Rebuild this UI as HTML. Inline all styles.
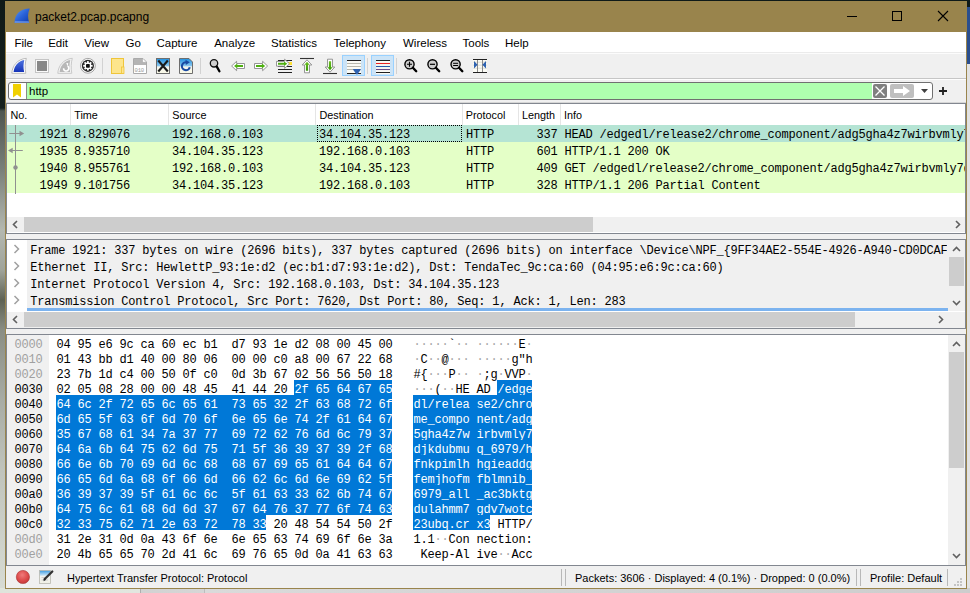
<!DOCTYPE html>
<html><head><meta charset="utf-8"><title>packet2.pcap.pcapng</title>
<style>
*{box-sizing:border-box}
html,body{margin:0;padding:0}
body{width:970px;height:593px;overflow:hidden;position:relative;background:#9aa097;font-family:"Liberation Sans",sans-serif;}
.a{position:absolute}
.ui{font-family:"Liberation Sans",sans-serif;color:#000;white-space:pre}
.mono{font-family:"Liberation Mono",monospace;white-space:pre;font-size:12px;letter-spacing:-0.2px;color:#000}
.sbg{background:#f0f0f0}
.thumb{background:#cdcdcd}
.bord{background:#828790}
</style></head>
<body>
<div class="a" style="left:0;top:0;width:970px;height:593px;background:linear-gradient(#0f1a18 0,#17211d 108px,#4e5650 111px,#7a807a 170px,#b4b8b0 230px,#a0a49a 270px,#5e6254 300px,#8a8e84 330px,#a8aca4 400px,#c0c4bc 470px,#d8dcd4 593px)"></div>
<div class="a" style="left:966px;top:0;width:4px;height:593px;background:#e2e2e2"></div>
<div class="a" style="left:966px;top:0;width:4px;height:7px;background:#0f1a18"></div>
<div class="a" style="left:966px;top:7px;width:4px;height:57px;background:#2b4f8e"></div>
<div class="a" style="left:0;top:588px;width:970px;height:5px;background:linear-gradient(90deg,#dfe4db 0,#e2e6df 140px,#8a8a8a 140px,#d2d2d2 141px,#d6d6d6 204px,#a0a0a0 204px,#dadada 205px,#cdcdcd 100%)"></div>
<div class="a" style="left:5px;top:1px;width:962px;height:588px;background:#99844c"></div>
<div class="a" style="left:6px;top:2px;width:960px;height:30px;background:#99844c"></div>
<div class="a sbg" style="left:6px;top:32px;width:960px;height:556px"></div>
<svg class="a" style="left:10px;top:4px" width="24" height="24" viewBox="10 4 24 24">
<defs><linearGradient id="fin" x1="0" y1="0" x2="1" y2="1"><stop offset="0" stop-color="#5a9af2"/><stop offset="0.5" stop-color="#2a62d8"/><stop offset="1" stop-color="#0c3aae"/></linearGradient>
<linearGradient id="finb" x1="0" y1="0" x2="0" y2="1"><stop offset="0" stop-color="#8ab4f4" stop-opacity="0"/><stop offset="0.5" stop-color="#9cbcf4" stop-opacity="0.7"/><stop offset="1" stop-color="#5c86d0" stop-opacity="0.8"/></linearGradient></defs>
<path d="M29.8 8.6 C20.5 8.8 14.8 13.5 14.5 22.9 L29.2 22.9 C27.6 18 27.6 13 29.8 8.6 Z" fill="url(#fin)"/>
<path d="M15 20.8 L28.6 20.8 L29.2 22.9 L14.5 22.9 Z" fill="url(#finb)"/>
</svg>
<div class="a ui" style="left:35px;top:10px;font-size:12px;color:#000">packet2.pcap.pcapng</div>
<div class="a" style="left:847px;top:16px;width:10px;height:1px;background:#000"></div>
<div class="a" style="left:892px;top:11px;width:10px;height:10px;border:1px solid #000"></div>
<svg class="a" style="left:937px;top:10px" width="12" height="12" viewBox="0 0 12 12"><path d="M1 1 L11 11 M11 1 L1 11" stroke="#000" stroke-width="1.1"/></svg>
<div class="a" style="left:6px;top:32px;width:960px;height:20px;background:#fff"></div>
<div class="a" style="left:6px;top:52px;width:960px;height:1px;background:#ebebeb"></div><div class="a" style="left:6px;top:53px;width:960px;height:1px;background:#fcfcfc"></div>
<div class="a ui" style="left:14.4px;top:37px;font-size:11.5px">File</div>
<div class="a ui" style="left:48.2px;top:37px;font-size:11.5px">Edit</div>
<div class="a ui" style="left:84.3px;top:37px;font-size:11.5px">View</div>
<div class="a ui" style="left:125.6px;top:37px;font-size:11.5px">Go</div>
<div class="a ui" style="left:156.5px;top:37px;font-size:11.5px">Capture</div>
<div class="a ui" style="left:214.2px;top:37px;font-size:11.5px">Analyze</div>
<div class="a ui" style="left:271px;top:37px;font-size:11.5px">Statistics</div>
<div class="a ui" style="left:333.5px;top:37px;font-size:11.5px">Telephony</div>
<div class="a ui" style="left:403px;top:37px;font-size:11.5px">Wireless</div>
<div class="a ui" style="left:462.5px;top:37px;font-size:11.5px">Tools</div>
<div class="a ui" style="left:505px;top:37px;font-size:11.5px">Help</div>
<svg class="a" style="left:0;top:0" width="500" height="80" viewBox="0 0 500 80">
<defs>
<linearGradient id="tfin" x1="0" y1="0" x2="0" y2="1"><stop offset="0" stop-color="#4f74e0"/><stop offset="1" stop-color="#1533b8"/></linearGradient>
<linearGradient id="docb" x1="0" y1="0" x2="0" y2="1"><stop offset="0" stop-color="#1e90e0"/><stop offset="0.5" stop-color="#8cc8f0"/><stop offset="0.55" stop-color="#f4f4ec"/><stop offset="1" stop-color="#fafae8"/></linearGradient>
<linearGradient id="grn" x1="0" y1="0" x2="0" y2="1"><stop offset="0" stop-color="#6cc020"/><stop offset="1" stop-color="#3a9a08"/></linearGradient>
</defs>
<!-- fin -->
<path d="M11.8 73.3 C12.3 66 17 59.2 26.3 58.3 C25 63 24.8 68 25.8 73.3 Z" fill="#fff" stroke="#b4b4b4" stroke-width="0.9"/>
<path d="M13.6 72 C14.2 66 18 61 24.3 59.9 C23.3 64 23.2 68 24.2 72 Z" fill="url(#tfin)"/>
<!-- stop -->
<rect x="35.5" y="59.5" width="13" height="13" fill="#fafafa" stroke="#c4c4c4"/>
<rect x="37" y="61" width="10" height="10" fill="#888"/>
<!-- restart -->
<path d="M57.8 73.3 C58.3 66 63 59.2 72.3 58.3 C71 63 70.8 68 71.8 73.3 Z" fill="#f4f4f4" stroke="#c4c4c4" stroke-width="0.9"/>
<path d="M59.6 72 C60.2 66 64 61 70.3 59.9 C69.3 64 69.2 68 70.2 72 Z" fill="#b8b8b8"/>
<path d="M67.6 66.2 A2.6 2.6 0 1 1 63.6 68.2" stroke="#fff" stroke-width="1.5" fill="none"/>
<path d="M66.2 63.2 L68.2 63 L67.8 66.5 Z" fill="#fff"/>
<!-- gear -->
<circle cx="87.9" cy="65.8" r="7.4" fill="#fff" stroke="#9a9a9a" stroke-width="0.9"/>
<circle cx="87.9" cy="65.8" r="6.1" fill="#2a2a2a"/>
<g fill="#fff" transform="translate(87.9 65.8)">
<circle r="3.4"/>
<rect x="-0.9" y="-4.7" width="1.8" height="9.4"/>
<rect x="-4.7" y="-0.9" width="9.4" height="1.8"/>
<rect x="-0.9" y="-4.7" width="1.8" height="9.4" transform="rotate(45)"/>
<rect x="-0.9" y="-4.7" width="1.8" height="9.4" transform="rotate(-45)"/>
</g>
<rect x="86" y="63.9" width="3.8" height="3.8" rx="0.8" fill="#111"/>
<!-- separators -->
<rect x="102" y="58" width="1" height="16" fill="#d2d2d2"/>
<rect x="200" y="58" width="1" height="16" fill="#d2d2d2"/>
<rect x="367" y="58" width="1" height="16" fill="#d2d2d2"/>
<rect x="396" y="58" width="1" height="16" fill="#d2d2d2"/>
<!-- folder -->
<rect x="111.5" y="58.5" width="12" height="15" fill="#fde58c" stroke="#efc53a"/>
<rect x="121.5" y="67" width="2.5" height="6.5" fill="#fde58c" stroke="#efc53a" stroke-width="0.8"/>
<!-- file 010 -->
<path d="M133.5 58.5 H143 L146.5 62 V73.5 H133.5 Z" fill="#fff" stroke="#aaa"/>
<path d="M134 59 H142.8 L146 62.2 V65 H134 Z" fill="#b4b4b4"/>
<path d="M142.5 58.8 V62.3 H146" fill="#fff" stroke="#aaa" stroke-width="0.6"/>
<text x="134.6" y="71.6" font-family="Liberation Mono" font-size="5.6" fill="#999" letter-spacing="-0.3">010</text>
<!-- close doc -->
<rect x="156.5" y="58.5" width="13" height="15" fill="url(#docb)" stroke="#6e6e6e"/>
<path d="M158.3 60.5 L167.8 71.5 M167.8 60.5 L158.3 71.5" stroke="#1a1a1a" stroke-width="2.1"/>
<!-- reload doc -->
<path d="M179.5 58.5 H189 L192.5 62 V73.5 H179.5 Z" fill="url(#docb)" stroke="#6e6e6e"/>
<path d="M189.8 67.2 A4 4 0 1 1 186.8 62.3" stroke="#1a4aa2" stroke-width="2.1" fill="none"/>
<path d="M185.5 59.8 L189.8 62.3 L185.8 65 Z" fill="#1a4aa2"/>
<!-- search -->
<circle cx="214" cy="63.3" r="3.7" fill="#cfcfcf" stroke="#111" stroke-width="1.3"/>
<path d="M216.8 66.6 L219.4 71.2" stroke="#000" stroke-width="2.3" stroke-linecap="round"/>
<!-- back arrow -->
<path d="M231.6 66 L236.6 61.3 V63.5 H244.5 V68.5 H236.6 V70.7 Z" fill="#fff" stroke="#8a8a8a" stroke-width="0.9" stroke-linejoin="round"/>
<path d="M234 66 L237.3 63.6 V65 H243 V67 H237.3 V68.4 Z" fill="#4fb012"/>
<!-- fwd arrow -->
<path d="M267.6 66 L262.6 61.3 V63.5 H254.5 V68.5 H262.6 V70.7 Z" fill="#fff" stroke="#8a8a8a" stroke-width="0.9" stroke-linejoin="round"/>
<path d="M265.2 66 L261.9 63.6 V65 H256 V67 H261.9 V68.4 Z" fill="#4fb012"/>
<!-- go to packet -->
<g stroke="#222" stroke-width="1.1">
<path d="M278 60.5 H292 M278 66.5 H292 M278 69.5 H292 M278 72.5 H292"/>
</g>
<rect x="288" y="62" width="4" height="3" fill="#ffe030"/>
<path d="M289.5 63.8 L284.6 59.2 V61.4 H276.5 V66.2 H284.6 V68.4 Z" fill="#fff" stroke="#8a8a8a" stroke-width="0.9" stroke-linejoin="round"/>
<path d="M287.3 63.8 L284 61.5 V62.8 H278 V64.8 H284 V66.1 Z" fill="#4fb012"/>
<!-- first packet -->
<path d="M300 58.5 H314" stroke="#333" stroke-width="1.1"/>
<path d="M307 59.8 L311.8 65 H309.5 V72.8 H304.5 V65 H302.2 Z" fill="#fff" stroke="#8a8a8a" stroke-width="0.9" stroke-linejoin="round"/>
<path d="M307 61.8 L309.6 64.8 H308.1 V70.8 H305.9 V64.8 H304.4 Z" fill="url(#grn)"/>
<!-- last packet -->
<path d="M323 73.5 H337" stroke="#333" stroke-width="1.1"/>
<path d="M330 72.2 L334.8 67 H332.5 V59.2 H327.5 V67 H325.2 Z" fill="#fff" stroke="#8a8a8a" stroke-width="0.9" stroke-linejoin="round"/>
<path d="M330 70.2 L332.6 67.2 H331.1 V61.2 H328.9 V67.2 H327.4 Z" fill="url(#grn)"/>
<!-- autoscroll -->
<rect x="342.5" y="55.5" width="22" height="20" fill="#cce4f7" stroke="#99d1ff"/>
<rect x="347" y="60" width="14" height="14" fill="#fbfbf5"/>
<path d="M347 60.5 H361 M347 73.5 H361" stroke="#222" stroke-width="1.1"/>
<path d="M347 63.5 H361 M347 66.5 H361 M347 69.5 H353" stroke="#b8b8ae" stroke-width="1.1"/>
<path d="M352.8 69 H361 C360.5 71 358.5 71.8 357.8 74.2 H356 C355.5 71.8 353.4 71 352.8 69 Z" fill="#2e62b0"/>
<!-- colorize -->
<rect x="371.5" y="55.5" width="22" height="20" fill="#cce4f7" stroke="#99d1ff"/>
<rect x="376" y="60" width="14" height="14" fill="#fbfbf5"/>
<path d="M376 60.5 H390 M376 72.5 H390" stroke="#222" stroke-width="1.1"/>
<path d="M376 63.5 H390" stroke="#e82222" stroke-width="1.1"/>
<path d="M376 66.5 H390" stroke="#2858a8" stroke-width="1.1"/>
<path d="M376 69.5 H390" stroke="#6a4a88" stroke-width="1.1"/>
<!-- zoom in/out/normal -->
<g>
<circle cx="409.5" cy="64.3" r="4.6" fill="#cdcdcd" stroke="#000" stroke-width="1.4"/>
<path d="M412.9 67.7 L416.2 71.2" stroke="#000" stroke-width="2.4" stroke-linecap="round"/>
<path d="M407 64.3 H412 M409.5 61.8 V66.8" stroke="#000" stroke-width="1.1"/>
<circle cx="432.5" cy="64.3" r="4.6" fill="#cdcdcd" stroke="#000" stroke-width="1.4"/>
<path d="M435.9 67.7 L439.2 71.2" stroke="#000" stroke-width="2.4" stroke-linecap="round"/>
<path d="M430 64.3 H435" stroke="#000" stroke-width="1.2"/>
<circle cx="455.6" cy="64.3" r="4.6" fill="#cdcdcd" stroke="#000" stroke-width="1.4"/>
<path d="M459 67.7 L462.3 71.2" stroke="#000" stroke-width="2.4" stroke-linecap="round"/>
<path d="M453.1 63.3 H458.1 M453.1 65.5 H458.1" stroke="#000" stroke-width="1"/>
</g>
<!-- resize columns -->
<rect x="473" y="59" width="14" height="14" fill="#fbfbf5"/>
<path d="M473 62.2 H487 M473 65.2 H487 M473 68.2 H487" stroke="#d8d8cc" stroke-width="0.8"/>
<path d="M477.5 59 V73 M482.5 59 V73" stroke="#8a8a8a" stroke-width="1"/>
<path d="M473 59.5 H487 M473 72.5 H487" stroke="#222" stroke-width="1.2"/>
<path d="M474 61 L477.6 64.8 L474 68.6 Z M486 61 L482.4 64.8 L486 68.6 Z" fill="#2e62b0"/>
</svg>
<div class="a" style="left:6px;top:78px;width:960px;height:1px;background:#c6c6c6"></div><div class="a" style="left:6px;top:79px;width:960px;height:1px;background:#fdfdfd"></div><div class="a" style="left:6px;top:102px;width:960px;height:1px;background:#d6d6d6"></div>
<div class="a" style="left:8px;top:82px;width:925px;height:18px;border:1px solid #707070;border-radius:3px;background:#fff;overflow:hidden"></div>
<div class="a" style="left:27px;top:83px;width:845px;height:16px;background:#afffaf"></div>
<div class="a" style="left:26px;top:83px;width:1px;height:16px;background:#8a8a8a"></div>
<svg class="a" style="left:13px;top:84px" width="9" height="14" viewBox="0 0 9 14"><path d="M0 0 H8 V13.5 L4 10.5 L0 13.5 Z" fill="#f0d000"/></svg>
<div class="a ui" style="left:29px;top:85px;font-size:11.5px">http</div>
<div class="a" style="left:873px;top:84px;width:14px;height:14px;background:#808080;border-radius:2px"></div>
<svg class="a" style="left:873px;top:84px" width="14" height="14" viewBox="0 0 14 14"><path d="M2.5 2.5 L11.5 11.5 M11.5 2.5 L2.5 11.5" stroke="#fff" stroke-width="1.3"/></svg>
<div class="a" style="left:890px;top:84px;width:24px;height:14px;background:#bfbfbf;border-radius:2px"></div>
<svg class="a" style="left:890px;top:84px" width="24" height="14" viewBox="0 0 24 14"><path d="M4 5 H13 V2 L20 7 L13 12 V9 H4 Z" fill="#fff"/></svg>
<svg class="a" style="left:920px;top:88px" width="9" height="6" viewBox="0 0 9 6"><path d="M1 1 H8 L4.5 5 Z" fill="#404040"/></svg>
<svg class="a" style="left:938px;top:86px" width="10" height="10" viewBox="0 0 10 10"><path d="M5 1 V9 M1 5 H9" stroke="#202020" stroke-width="1.8"/></svg>
<div class="a" style="left:6px;top:103px;width:960px;height:131px;border:1px solid #828790;background:#fff;overflow:hidden">
<div class="a" style="left:63.0px;top:0;width:1px;height:21px;background:#e5e5e5"></div>
<div class="a" style="left:161.0px;top:0;width:1px;height:21px;background:#e5e5e5"></div>
<div class="a" style="left:308.0px;top:0;width:1px;height:21px;background:#e5e5e5"></div>
<div class="a" style="left:455.0px;top:0;width:1px;height:21px;background:#e5e5e5"></div>
<div class="a" style="left:511.0px;top:0;width:1px;height:21px;background:#e5e5e5"></div>
<div class="a" style="left:553.0px;top:0;width:1px;height:21px;background:#e5e5e5"></div>
<div class="a ui" style="left:3.5px;top:5px;font-size:10.8px">No.</div>
<div class="a ui" style="left:67.2px;top:5px;font-size:10.8px">Time</div>
<div class="a ui" style="left:165.3px;top:5px;font-size:10.8px">Source</div>
<div class="a ui" style="left:312.5px;top:5px;font-size:10.8px">Destination</div>
<div class="a ui" style="left:458.8px;top:5px;font-size:10.8px">Protocol</div>
<div class="a ui" style="left:514.9px;top:5px;font-size:10.8px">Length</div>
<div class="a ui" style="left:556.9px;top:5px;font-size:10.8px">Info</div>
<div class="a" style="left:0;top:21px;width:958px;height:17px;background:#b5e4d4"></div>
<div class="a mono" style="left:32.5px;top:24px">1921</div>
<div class="a mono" style="left:67.0px;top:24px">8.829076</div>
<div class="a mono" style="left:165.0px;top:24px">192.168.0.103</div>
<div class="a mono" style="left:312.0px;top:24px">34.104.35.123</div>
<div class="a mono" style="left:459.0px;top:24px">HTTP</div>
<div class="a mono" style="left:529.6px;top:24px">337</div>
<div class="a mono" style="left:557.4px;top:24px">HEAD /edgedl/release2/chrome_component/adg5gha4z7wirbvmly7djkdubmuq_6979/hfnkpimlhhgieaddgfemjhofmfblmnib_6979_all_ac3bktgdulahmm7gdv7wotc23ubq.crx3 HTTP/1.1</div>
<div class="a" style="left:0;top:38px;width:958px;height:17px;background:#e4ffc7"></div>
<div class="a mono" style="left:32.5px;top:41px">1935</div>
<div class="a mono" style="left:67.0px;top:41px">8.935710</div>
<div class="a mono" style="left:165.0px;top:41px">34.104.35.123</div>
<div class="a mono" style="left:312.0px;top:41px">192.168.0.103</div>
<div class="a mono" style="left:459.0px;top:41px">HTTP</div>
<div class="a mono" style="left:529.6px;top:41px">601</div>
<div class="a mono" style="left:557.4px;top:41px">HTTP/1.1 200 OK</div>
<div class="a" style="left:0;top:55px;width:958px;height:17px;background:#e4ffc7"></div>
<div class="a mono" style="left:32.5px;top:58px">1940</div>
<div class="a mono" style="left:67.0px;top:58px">8.955761</div>
<div class="a mono" style="left:165.0px;top:58px">192.168.0.103</div>
<div class="a mono" style="left:312.0px;top:58px">34.104.35.123</div>
<div class="a mono" style="left:459.0px;top:58px">HTTP</div>
<div class="a mono" style="left:529.6px;top:58px">409</div>
<div class="a mono" style="left:557.4px;top:58px">GET /edgedl/release2/chrome_component/adg5gha4z7wirbvmly7djkdubmuq_6979/hfnkpimlhhgieaddgfemjhofmfblmnib_6979_all_ac3bktgdulahmm7gdv7wotc23ubq.crx3 HTTP/1.1</div>
<div class="a" style="left:0;top:72px;width:958px;height:17px;background:#e4ffc7"></div>
<div class="a mono" style="left:32.5px;top:75px">1949</div>
<div class="a mono" style="left:67.0px;top:75px">9.101756</div>
<div class="a mono" style="left:165.0px;top:75px">34.104.35.123</div>
<div class="a mono" style="left:312.0px;top:75px">192.168.0.103</div>
<div class="a mono" style="left:459.0px;top:75px">HTTP</div>
<div class="a mono" style="left:529.6px;top:75px">328</div>
<div class="a mono" style="left:557.4px;top:75px">HTTP/1.1 206 Partial Content</div>
<div class="a" style="left:310px;top:21px;width:145px;height:17px;border:1px dotted #000"></div>
<div class="a" style="left:8px;top:21px;width:1px;height:69px;background:#909090"></div>
<svg class="a" style="left:-2px;top:21px" width="24" height="70" viewBox="0 0 24 70">
<path d="M4.3 8.5 H16" stroke="#909090" stroke-width="1"/><path d="M14.5 5.8 L19.2 8.5 L14.5 11.2 Z" fill="#909090"/>
<path d="M6 25.5 H17.8" stroke="#909090" stroke-width="1"/><path d="M7.7 22.8 L3 25.5 L7.7 28.2 Z" fill="#909090"/>
<circle cx="10.5" cy="42.5" r="2.2" fill="#909090"/>
</svg>
<div class="a sbg" style="left:0;top:113px;width:958px;height:15px"></div>
<div class="a thumb" style="left:17px;top:113px;width:569px;height:15px"></div>
<svg class="a" style="left:4px;top:116px" width="9" height="9" viewBox="0 0 9 9"><path d="M6 1 L2.5 4.5 L6 8" stroke="#606060" stroke-width="1.6" fill="none"/></svg>
<svg class="a" style="left:946px;top:116px" width="9" height="9" viewBox="0 0 9 9"><path d="M3 1 L6.5 4.5 L3 8" stroke="#606060" stroke-width="1.6" fill="none"/></svg>
</div>
<div class="a" style="left:6px;top:239px;width:960px;height:90px;border:1px solid #828790;background:#fff;overflow:hidden">
<div class="a sbg" style="left:20px;top:0;width:921px;height:68px"></div>
<div class="a" style="left:20px;top:68px;width:921px;height:3px;background:#7cb3ef"></div>
<svg class="a" style="left:6px;top:4px" width="8" height="10" viewBox="0 0 8 10"><path d="M1.5 1 L5.5 5 L1.5 9" stroke="#a0a0a0" stroke-width="1.5" fill="none"/></svg>
<div class="a" style="left:23.3px;top:4px;width:917px;height:17px;overflow:hidden"><div class="a mono" style="left:0;top:0">Frame 1921: 337 bytes on wire (2696 bits), 337 bytes captured (2696 bits) on interface \Device\NPF_{9FF34AE2-554E-4926-A940-CD0DCAF2ABCD}, id 0</div></div>
<svg class="a" style="left:6px;top:21px" width="8" height="10" viewBox="0 0 8 10"><path d="M1.5 1 L5.5 5 L1.5 9" stroke="#a0a0a0" stroke-width="1.5" fill="none"/></svg>
<div class="a" style="left:23.3px;top:21px;width:917px;height:17px;overflow:hidden"><div class="a mono" style="left:0;top:0">Ethernet II, Src: HewlettP_93:1e:d2 (ec:b1:d7:93:1e:d2), Dst: TendaTec_9c:ca:60 (04:95:e6:9c:ca:60)</div></div>
<svg class="a" style="left:6px;top:38px" width="8" height="10" viewBox="0 0 8 10"><path d="M1.5 1 L5.5 5 L1.5 9" stroke="#a0a0a0" stroke-width="1.5" fill="none"/></svg>
<div class="a" style="left:23.3px;top:38px;width:917px;height:17px;overflow:hidden"><div class="a mono" style="left:0;top:0">Internet Protocol Version 4, Src: 192.168.0.103, Dst: 34.104.35.123</div></div>
<svg class="a" style="left:6px;top:55px" width="8" height="10" viewBox="0 0 8 10"><path d="M1.5 1 L5.5 5 L1.5 9" stroke="#a0a0a0" stroke-width="1.5" fill="none"/></svg>
<div class="a" style="left:23.3px;top:55px;width:917px;height:17px;overflow:hidden"><div class="a mono" style="left:0;top:0">Transmission Control Protocol, Src Port: 7620, Dst Port: 80, Seq: 1, Ack: 1, Len: 283</div></div>
<div class="a sbg" style="left:941px;top:0;width:17px;height:71px"></div>
<div class="a thumb" style="left:942px;top:17px;width:15px;height:29px"></div>
<svg class="a" style="left:945px;top:5px" width="9" height="9" viewBox="0 0 9 9"><path d="M1 6 L4.5 2.5 L8 6" stroke="#606060" stroke-width="1.6" fill="none"/></svg>
<svg class="a" style="left:945px;top:58px" width="9" height="9" viewBox="0 0 9 9"><path d="M1 3 L4.5 6.5 L8 3" stroke="#606060" stroke-width="1.6" fill="none"/></svg>
<div class="a sbg" style="left:0;top:72px;width:958px;height:16px"></div>
<div class="a thumb" style="left:17px;top:72px;width:831px;height:15px"></div>
<svg class="a" style="left:4px;top:75px" width="9" height="9" viewBox="0 0 9 9"><path d="M6 1 L2.5 4.5 L6 8" stroke="#606060" stroke-width="1.6" fill="none"/></svg>
<svg class="a" style="left:929px;top:75px" width="9" height="9" viewBox="0 0 9 9"><path d="M3 1 L6.5 4.5 L3 8" stroke="#606060" stroke-width="1.6" fill="none"/></svg>
</div>
<div class="a" style="left:6px;top:334px;width:960px;height:232px;border:1px solid #828790;background:#fff;overflow:hidden">
<div class="a sbg" style="left:0;top:0;width:42px;height:230px"></div>
<div class="a mono" style="left:7.4px;top:3px;color:#a0a0a0">0000</div>
<div class="a mono" style="left:49.4px;top:3px;color:#000">04</div>
<div class="a mono" style="left:406.4px;top:3px;color:#a8a8a8">·</div>
<div class="a mono" style="left:70.4px;top:3px;color:#000">95</div>
<div class="a mono" style="left:413.4px;top:3px;color:#a8a8a8">·</div>
<div class="a mono" style="left:91.4px;top:3px;color:#000">e6</div>
<div class="a mono" style="left:420.4px;top:3px;color:#a8a8a8">·</div>
<div class="a mono" style="left:112.4px;top:3px;color:#000">9c</div>
<div class="a mono" style="left:427.4px;top:3px;color:#a8a8a8">·</div>
<div class="a mono" style="left:133.4px;top:3px;color:#000">ca</div>
<div class="a mono" style="left:434.4px;top:3px;color:#a8a8a8">·</div>
<div class="a mono" style="left:154.4px;top:3px;color:#000">60</div>
<div class="a mono" style="left:441.4px;top:3px;color:#000">`</div>
<div class="a mono" style="left:175.4px;top:3px;color:#000">ec</div>
<div class="a mono" style="left:448.4px;top:3px;color:#a8a8a8">·</div>
<div class="a mono" style="left:196.4px;top:3px;color:#000">b1</div>
<div class="a mono" style="left:455.4px;top:3px;color:#a8a8a8">·</div>
<div class="a mono" style="left:224.4px;top:3px;color:#000">d7</div>
<div class="a mono" style="left:469.4px;top:3px;color:#a8a8a8">·</div>
<div class="a mono" style="left:245.4px;top:3px;color:#000">93</div>
<div class="a mono" style="left:476.4px;top:3px;color:#a8a8a8">·</div>
<div class="a mono" style="left:266.4px;top:3px;color:#000">1e</div>
<div class="a mono" style="left:483.4px;top:3px;color:#a8a8a8">·</div>
<div class="a mono" style="left:287.4px;top:3px;color:#000">d2</div>
<div class="a mono" style="left:490.4px;top:3px;color:#a8a8a8">·</div>
<div class="a mono" style="left:308.4px;top:3px;color:#000">08</div>
<div class="a mono" style="left:497.4px;top:3px;color:#a8a8a8">·</div>
<div class="a mono" style="left:329.4px;top:3px;color:#000">00</div>
<div class="a mono" style="left:504.4px;top:3px;color:#a8a8a8">·</div>
<div class="a mono" style="left:350.4px;top:3px;color:#000">45</div>
<div class="a mono" style="left:511.4px;top:3px;color:#000">E</div>
<div class="a mono" style="left:371.4px;top:3px;color:#000">00</div>
<div class="a mono" style="left:518.4px;top:3px;color:#a8a8a8">·</div>
<div class="a mono" style="left:7.4px;top:18px;color:#a0a0a0">0010</div>
<div class="a mono" style="left:49.4px;top:18px;color:#000">01</div>
<div class="a mono" style="left:406.4px;top:18px;color:#a8a8a8">·</div>
<div class="a mono" style="left:70.4px;top:18px;color:#000">43</div>
<div class="a mono" style="left:413.4px;top:18px;color:#000">C</div>
<div class="a mono" style="left:91.4px;top:18px;color:#000">bb</div>
<div class="a mono" style="left:420.4px;top:18px;color:#a8a8a8">·</div>
<div class="a mono" style="left:112.4px;top:18px;color:#000">d1</div>
<div class="a mono" style="left:427.4px;top:18px;color:#a8a8a8">·</div>
<div class="a mono" style="left:133.4px;top:18px;color:#000">40</div>
<div class="a mono" style="left:434.4px;top:18px;color:#000">@</div>
<div class="a mono" style="left:154.4px;top:18px;color:#000">00</div>
<div class="a mono" style="left:441.4px;top:18px;color:#a8a8a8">·</div>
<div class="a mono" style="left:175.4px;top:18px;color:#000">80</div>
<div class="a mono" style="left:448.4px;top:18px;color:#a8a8a8">·</div>
<div class="a mono" style="left:196.4px;top:18px;color:#000">06</div>
<div class="a mono" style="left:455.4px;top:18px;color:#a8a8a8">·</div>
<div class="a mono" style="left:224.4px;top:18px;color:#000">00</div>
<div class="a mono" style="left:469.4px;top:18px;color:#a8a8a8">·</div>
<div class="a mono" style="left:245.4px;top:18px;color:#000">00</div>
<div class="a mono" style="left:476.4px;top:18px;color:#a8a8a8">·</div>
<div class="a mono" style="left:266.4px;top:18px;color:#000">c0</div>
<div class="a mono" style="left:483.4px;top:18px;color:#a8a8a8">·</div>
<div class="a mono" style="left:287.4px;top:18px;color:#000">a8</div>
<div class="a mono" style="left:490.4px;top:18px;color:#a8a8a8">·</div>
<div class="a mono" style="left:308.4px;top:18px;color:#000">00</div>
<div class="a mono" style="left:497.4px;top:18px;color:#a8a8a8">·</div>
<div class="a mono" style="left:329.4px;top:18px;color:#000">67</div>
<div class="a mono" style="left:504.4px;top:18px;color:#000">g</div>
<div class="a mono" style="left:350.4px;top:18px;color:#000">22</div>
<div class="a mono" style="left:511.4px;top:18px;color:#000">"</div>
<div class="a mono" style="left:371.4px;top:18px;color:#000">68</div>
<div class="a mono" style="left:518.4px;top:18px;color:#000">h</div>
<div class="a mono" style="left:7.4px;top:33px;color:#a0a0a0">0020</div>
<div class="a mono" style="left:49.4px;top:33px;color:#000">23</div>
<div class="a mono" style="left:406.4px;top:33px;color:#000">#</div>
<div class="a mono" style="left:70.4px;top:33px;color:#000">7b</div>
<div class="a mono" style="left:413.4px;top:33px;color:#000">{</div>
<div class="a mono" style="left:91.4px;top:33px;color:#000">1d</div>
<div class="a mono" style="left:420.4px;top:33px;color:#a8a8a8">·</div>
<div class="a mono" style="left:112.4px;top:33px;color:#000">c4</div>
<div class="a mono" style="left:427.4px;top:33px;color:#a8a8a8">·</div>
<div class="a mono" style="left:133.4px;top:33px;color:#000">00</div>
<div class="a mono" style="left:434.4px;top:33px;color:#a8a8a8">·</div>
<div class="a mono" style="left:154.4px;top:33px;color:#000">50</div>
<div class="a mono" style="left:441.4px;top:33px;color:#000">P</div>
<div class="a mono" style="left:175.4px;top:33px;color:#000">0f</div>
<div class="a mono" style="left:448.4px;top:33px;color:#a8a8a8">·</div>
<div class="a mono" style="left:196.4px;top:33px;color:#000">c0</div>
<div class="a mono" style="left:455.4px;top:33px;color:#a8a8a8">·</div>
<div class="a mono" style="left:224.4px;top:33px;color:#000">0d</div>
<div class="a mono" style="left:469.4px;top:33px;color:#a8a8a8">·</div>
<div class="a mono" style="left:245.4px;top:33px;color:#000">3b</div>
<div class="a mono" style="left:476.4px;top:33px;color:#000">;</div>
<div class="a mono" style="left:266.4px;top:33px;color:#000">67</div>
<div class="a mono" style="left:483.4px;top:33px;color:#000">g</div>
<div class="a mono" style="left:287.4px;top:33px;color:#000">02</div>
<div class="a mono" style="left:490.4px;top:33px;color:#a8a8a8">·</div>
<div class="a mono" style="left:308.4px;top:33px;color:#000">56</div>
<div class="a mono" style="left:497.4px;top:33px;color:#000">V</div>
<div class="a mono" style="left:329.4px;top:33px;color:#000">56</div>
<div class="a mono" style="left:504.4px;top:33px;color:#000">V</div>
<div class="a mono" style="left:350.4px;top:33px;color:#000">50</div>
<div class="a mono" style="left:511.4px;top:33px;color:#000">P</div>
<div class="a mono" style="left:371.4px;top:33px;color:#000">18</div>
<div class="a mono" style="left:518.4px;top:33px;color:#a8a8a8">·</div>
<div class="a mono" style="left:7.4px;top:48px;color:#000">0030</div>
<div class="a" style="left:287.4px;top:45px;width:98.0px;height:15px;background:#0078d7"></div>
<div class="a" style="left:490.4px;top:45px;width:35.0px;height:15px;background:#0078d7"></div>
<div class="a mono" style="left:49.4px;top:48px;color:#000">02</div>
<div class="a mono" style="left:406.4px;top:48px;color:#a8a8a8">·</div>
<div class="a mono" style="left:70.4px;top:48px;color:#000">05</div>
<div class="a mono" style="left:413.4px;top:48px;color:#a8a8a8">·</div>
<div class="a mono" style="left:91.4px;top:48px;color:#000">08</div>
<div class="a mono" style="left:420.4px;top:48px;color:#a8a8a8">·</div>
<div class="a mono" style="left:112.4px;top:48px;color:#000">28</div>
<div class="a mono" style="left:427.4px;top:48px;color:#000">(</div>
<div class="a mono" style="left:133.4px;top:48px;color:#000">00</div>
<div class="a mono" style="left:434.4px;top:48px;color:#a8a8a8">·</div>
<div class="a mono" style="left:154.4px;top:48px;color:#000">00</div>
<div class="a mono" style="left:441.4px;top:48px;color:#a8a8a8">·</div>
<div class="a mono" style="left:175.4px;top:48px;color:#000">48</div>
<div class="a mono" style="left:448.4px;top:48px;color:#000">H</div>
<div class="a mono" style="left:196.4px;top:48px;color:#000">45</div>
<div class="a mono" style="left:455.4px;top:48px;color:#000">E</div>
<div class="a mono" style="left:224.4px;top:48px;color:#000">41</div>
<div class="a mono" style="left:469.4px;top:48px;color:#000">A</div>
<div class="a mono" style="left:245.4px;top:48px;color:#000">44</div>
<div class="a mono" style="left:476.4px;top:48px;color:#000">D</div>
<div class="a mono" style="left:266.4px;top:48px;color:#000">20</div>
<div class="a mono" style="left:287.4px;top:48px;color:#fff">2f</div>
<div class="a mono" style="left:490.4px;top:48px;color:#fff">/</div>
<div class="a mono" style="left:308.4px;top:48px;color:#fff">65</div>
<div class="a mono" style="left:497.4px;top:48px;color:#fff">e</div>
<div class="a mono" style="left:329.4px;top:48px;color:#fff">64</div>
<div class="a mono" style="left:504.4px;top:48px;color:#fff">d</div>
<div class="a mono" style="left:350.4px;top:48px;color:#fff">67</div>
<div class="a mono" style="left:511.4px;top:48px;color:#fff">g</div>
<div class="a mono" style="left:371.4px;top:48px;color:#fff">65</div>
<div class="a mono" style="left:518.4px;top:48px;color:#fff">e</div>
<div class="a mono" style="left:7.4px;top:63px;color:#000">0040</div>
<div class="a" style="left:49.4px;top:60px;width:336.0px;height:15px;background:#0078d7"></div>
<div class="a" style="left:406.4px;top:60px;width:119.0px;height:15px;background:#0078d7"></div>
<div class="a mono" style="left:49.4px;top:63px;color:#fff">64</div>
<div class="a mono" style="left:406.4px;top:63px;color:#fff">d</div>
<div class="a mono" style="left:70.4px;top:63px;color:#fff">6c</div>
<div class="a mono" style="left:413.4px;top:63px;color:#fff">l</div>
<div class="a mono" style="left:91.4px;top:63px;color:#fff">2f</div>
<div class="a mono" style="left:420.4px;top:63px;color:#fff">/</div>
<div class="a mono" style="left:112.4px;top:63px;color:#fff">72</div>
<div class="a mono" style="left:427.4px;top:63px;color:#fff">r</div>
<div class="a mono" style="left:133.4px;top:63px;color:#fff">65</div>
<div class="a mono" style="left:434.4px;top:63px;color:#fff">e</div>
<div class="a mono" style="left:154.4px;top:63px;color:#fff">6c</div>
<div class="a mono" style="left:441.4px;top:63px;color:#fff">l</div>
<div class="a mono" style="left:175.4px;top:63px;color:#fff">65</div>
<div class="a mono" style="left:448.4px;top:63px;color:#fff">e</div>
<div class="a mono" style="left:196.4px;top:63px;color:#fff">61</div>
<div class="a mono" style="left:455.4px;top:63px;color:#fff">a</div>
<div class="a mono" style="left:224.4px;top:63px;color:#fff">73</div>
<div class="a mono" style="left:469.4px;top:63px;color:#fff">s</div>
<div class="a mono" style="left:245.4px;top:63px;color:#fff">65</div>
<div class="a mono" style="left:476.4px;top:63px;color:#fff">e</div>
<div class="a mono" style="left:266.4px;top:63px;color:#fff">32</div>
<div class="a mono" style="left:483.4px;top:63px;color:#fff">2</div>
<div class="a mono" style="left:287.4px;top:63px;color:#fff">2f</div>
<div class="a mono" style="left:490.4px;top:63px;color:#fff">/</div>
<div class="a mono" style="left:308.4px;top:63px;color:#fff">63</div>
<div class="a mono" style="left:497.4px;top:63px;color:#fff">c</div>
<div class="a mono" style="left:329.4px;top:63px;color:#fff">68</div>
<div class="a mono" style="left:504.4px;top:63px;color:#fff">h</div>
<div class="a mono" style="left:350.4px;top:63px;color:#fff">72</div>
<div class="a mono" style="left:511.4px;top:63px;color:#fff">r</div>
<div class="a mono" style="left:371.4px;top:63px;color:#fff">6f</div>
<div class="a mono" style="left:518.4px;top:63px;color:#fff">o</div>
<div class="a mono" style="left:7.4px;top:78px;color:#000">0050</div>
<div class="a" style="left:49.4px;top:75px;width:336.0px;height:15px;background:#0078d7"></div>
<div class="a" style="left:406.4px;top:75px;width:119.0px;height:15px;background:#0078d7"></div>
<div class="a mono" style="left:49.4px;top:78px;color:#fff">6d</div>
<div class="a mono" style="left:406.4px;top:78px;color:#fff">m</div>
<div class="a mono" style="left:70.4px;top:78px;color:#fff">65</div>
<div class="a mono" style="left:413.4px;top:78px;color:#fff">e</div>
<div class="a mono" style="left:91.4px;top:78px;color:#fff">5f</div>
<div class="a mono" style="left:420.4px;top:78px;color:#fff">_</div>
<div class="a mono" style="left:112.4px;top:78px;color:#fff">63</div>
<div class="a mono" style="left:427.4px;top:78px;color:#fff">c</div>
<div class="a mono" style="left:133.4px;top:78px;color:#fff">6f</div>
<div class="a mono" style="left:434.4px;top:78px;color:#fff">o</div>
<div class="a mono" style="left:154.4px;top:78px;color:#fff">6d</div>
<div class="a mono" style="left:441.4px;top:78px;color:#fff">m</div>
<div class="a mono" style="left:175.4px;top:78px;color:#fff">70</div>
<div class="a mono" style="left:448.4px;top:78px;color:#fff">p</div>
<div class="a mono" style="left:196.4px;top:78px;color:#fff">6f</div>
<div class="a mono" style="left:455.4px;top:78px;color:#fff">o</div>
<div class="a mono" style="left:224.4px;top:78px;color:#fff">6e</div>
<div class="a mono" style="left:469.4px;top:78px;color:#fff">n</div>
<div class="a mono" style="left:245.4px;top:78px;color:#fff">65</div>
<div class="a mono" style="left:476.4px;top:78px;color:#fff">e</div>
<div class="a mono" style="left:266.4px;top:78px;color:#fff">6e</div>
<div class="a mono" style="left:483.4px;top:78px;color:#fff">n</div>
<div class="a mono" style="left:287.4px;top:78px;color:#fff">74</div>
<div class="a mono" style="left:490.4px;top:78px;color:#fff">t</div>
<div class="a mono" style="left:308.4px;top:78px;color:#fff">2f</div>
<div class="a mono" style="left:497.4px;top:78px;color:#fff">/</div>
<div class="a mono" style="left:329.4px;top:78px;color:#fff">61</div>
<div class="a mono" style="left:504.4px;top:78px;color:#fff">a</div>
<div class="a mono" style="left:350.4px;top:78px;color:#fff">64</div>
<div class="a mono" style="left:511.4px;top:78px;color:#fff">d</div>
<div class="a mono" style="left:371.4px;top:78px;color:#fff">67</div>
<div class="a mono" style="left:518.4px;top:78px;color:#fff">g</div>
<div class="a mono" style="left:7.4px;top:93px;color:#000">0060</div>
<div class="a" style="left:49.4px;top:90px;width:336.0px;height:15px;background:#0078d7"></div>
<div class="a" style="left:406.4px;top:90px;width:119.0px;height:15px;background:#0078d7"></div>
<div class="a mono" style="left:49.4px;top:93px;color:#fff">35</div>
<div class="a mono" style="left:406.4px;top:93px;color:#fff">5</div>
<div class="a mono" style="left:70.4px;top:93px;color:#fff">67</div>
<div class="a mono" style="left:413.4px;top:93px;color:#fff">g</div>
<div class="a mono" style="left:91.4px;top:93px;color:#fff">68</div>
<div class="a mono" style="left:420.4px;top:93px;color:#fff">h</div>
<div class="a mono" style="left:112.4px;top:93px;color:#fff">61</div>
<div class="a mono" style="left:427.4px;top:93px;color:#fff">a</div>
<div class="a mono" style="left:133.4px;top:93px;color:#fff">34</div>
<div class="a mono" style="left:434.4px;top:93px;color:#fff">4</div>
<div class="a mono" style="left:154.4px;top:93px;color:#fff">7a</div>
<div class="a mono" style="left:441.4px;top:93px;color:#fff">z</div>
<div class="a mono" style="left:175.4px;top:93px;color:#fff">37</div>
<div class="a mono" style="left:448.4px;top:93px;color:#fff">7</div>
<div class="a mono" style="left:196.4px;top:93px;color:#fff">77</div>
<div class="a mono" style="left:455.4px;top:93px;color:#fff">w</div>
<div class="a mono" style="left:224.4px;top:93px;color:#fff">69</div>
<div class="a mono" style="left:469.4px;top:93px;color:#fff">i</div>
<div class="a mono" style="left:245.4px;top:93px;color:#fff">72</div>
<div class="a mono" style="left:476.4px;top:93px;color:#fff">r</div>
<div class="a mono" style="left:266.4px;top:93px;color:#fff">62</div>
<div class="a mono" style="left:483.4px;top:93px;color:#fff">b</div>
<div class="a mono" style="left:287.4px;top:93px;color:#fff">76</div>
<div class="a mono" style="left:490.4px;top:93px;color:#fff">v</div>
<div class="a mono" style="left:308.4px;top:93px;color:#fff">6d</div>
<div class="a mono" style="left:497.4px;top:93px;color:#fff">m</div>
<div class="a mono" style="left:329.4px;top:93px;color:#fff">6c</div>
<div class="a mono" style="left:504.4px;top:93px;color:#fff">l</div>
<div class="a mono" style="left:350.4px;top:93px;color:#fff">79</div>
<div class="a mono" style="left:511.4px;top:93px;color:#fff">y</div>
<div class="a mono" style="left:371.4px;top:93px;color:#fff">37</div>
<div class="a mono" style="left:518.4px;top:93px;color:#fff">7</div>
<div class="a mono" style="left:7.4px;top:108px;color:#000">0070</div>
<div class="a" style="left:49.4px;top:105px;width:336.0px;height:15px;background:#0078d7"></div>
<div class="a" style="left:406.4px;top:105px;width:119.0px;height:15px;background:#0078d7"></div>
<div class="a mono" style="left:49.4px;top:108px;color:#fff">64</div>
<div class="a mono" style="left:406.4px;top:108px;color:#fff">d</div>
<div class="a mono" style="left:70.4px;top:108px;color:#fff">6a</div>
<div class="a mono" style="left:413.4px;top:108px;color:#fff">j</div>
<div class="a mono" style="left:91.4px;top:108px;color:#fff">6b</div>
<div class="a mono" style="left:420.4px;top:108px;color:#fff">k</div>
<div class="a mono" style="left:112.4px;top:108px;color:#fff">64</div>
<div class="a mono" style="left:427.4px;top:108px;color:#fff">d</div>
<div class="a mono" style="left:133.4px;top:108px;color:#fff">75</div>
<div class="a mono" style="left:434.4px;top:108px;color:#fff">u</div>
<div class="a mono" style="left:154.4px;top:108px;color:#fff">62</div>
<div class="a mono" style="left:441.4px;top:108px;color:#fff">b</div>
<div class="a mono" style="left:175.4px;top:108px;color:#fff">6d</div>
<div class="a mono" style="left:448.4px;top:108px;color:#fff">m</div>
<div class="a mono" style="left:196.4px;top:108px;color:#fff">75</div>
<div class="a mono" style="left:455.4px;top:108px;color:#fff">u</div>
<div class="a mono" style="left:224.4px;top:108px;color:#fff">71</div>
<div class="a mono" style="left:469.4px;top:108px;color:#fff">q</div>
<div class="a mono" style="left:245.4px;top:108px;color:#fff">5f</div>
<div class="a mono" style="left:476.4px;top:108px;color:#fff">_</div>
<div class="a mono" style="left:266.4px;top:108px;color:#fff">36</div>
<div class="a mono" style="left:483.4px;top:108px;color:#fff">6</div>
<div class="a mono" style="left:287.4px;top:108px;color:#fff">39</div>
<div class="a mono" style="left:490.4px;top:108px;color:#fff">9</div>
<div class="a mono" style="left:308.4px;top:108px;color:#fff">37</div>
<div class="a mono" style="left:497.4px;top:108px;color:#fff">7</div>
<div class="a mono" style="left:329.4px;top:108px;color:#fff">39</div>
<div class="a mono" style="left:504.4px;top:108px;color:#fff">9</div>
<div class="a mono" style="left:350.4px;top:108px;color:#fff">2f</div>
<div class="a mono" style="left:511.4px;top:108px;color:#fff">/</div>
<div class="a mono" style="left:371.4px;top:108px;color:#fff">68</div>
<div class="a mono" style="left:518.4px;top:108px;color:#fff">h</div>
<div class="a mono" style="left:7.4px;top:123px;color:#000">0080</div>
<div class="a" style="left:49.4px;top:120px;width:336.0px;height:15px;background:#0078d7"></div>
<div class="a" style="left:406.4px;top:120px;width:119.0px;height:15px;background:#0078d7"></div>
<div class="a mono" style="left:49.4px;top:123px;color:#fff">66</div>
<div class="a mono" style="left:406.4px;top:123px;color:#fff">f</div>
<div class="a mono" style="left:70.4px;top:123px;color:#fff">6e</div>
<div class="a mono" style="left:413.4px;top:123px;color:#fff">n</div>
<div class="a mono" style="left:91.4px;top:123px;color:#fff">6b</div>
<div class="a mono" style="left:420.4px;top:123px;color:#fff">k</div>
<div class="a mono" style="left:112.4px;top:123px;color:#fff">70</div>
<div class="a mono" style="left:427.4px;top:123px;color:#fff">p</div>
<div class="a mono" style="left:133.4px;top:123px;color:#fff">69</div>
<div class="a mono" style="left:434.4px;top:123px;color:#fff">i</div>
<div class="a mono" style="left:154.4px;top:123px;color:#fff">6d</div>
<div class="a mono" style="left:441.4px;top:123px;color:#fff">m</div>
<div class="a mono" style="left:175.4px;top:123px;color:#fff">6c</div>
<div class="a mono" style="left:448.4px;top:123px;color:#fff">l</div>
<div class="a mono" style="left:196.4px;top:123px;color:#fff">68</div>
<div class="a mono" style="left:455.4px;top:123px;color:#fff">h</div>
<div class="a mono" style="left:224.4px;top:123px;color:#fff">68</div>
<div class="a mono" style="left:469.4px;top:123px;color:#fff">h</div>
<div class="a mono" style="left:245.4px;top:123px;color:#fff">67</div>
<div class="a mono" style="left:476.4px;top:123px;color:#fff">g</div>
<div class="a mono" style="left:266.4px;top:123px;color:#fff">69</div>
<div class="a mono" style="left:483.4px;top:123px;color:#fff">i</div>
<div class="a mono" style="left:287.4px;top:123px;color:#fff">65</div>
<div class="a mono" style="left:490.4px;top:123px;color:#fff">e</div>
<div class="a mono" style="left:308.4px;top:123px;color:#fff">61</div>
<div class="a mono" style="left:497.4px;top:123px;color:#fff">a</div>
<div class="a mono" style="left:329.4px;top:123px;color:#fff">64</div>
<div class="a mono" style="left:504.4px;top:123px;color:#fff">d</div>
<div class="a mono" style="left:350.4px;top:123px;color:#fff">64</div>
<div class="a mono" style="left:511.4px;top:123px;color:#fff">d</div>
<div class="a mono" style="left:371.4px;top:123px;color:#fff">67</div>
<div class="a mono" style="left:518.4px;top:123px;color:#fff">g</div>
<div class="a mono" style="left:7.4px;top:138px;color:#000">0090</div>
<div class="a" style="left:49.4px;top:135px;width:336.0px;height:15px;background:#0078d7"></div>
<div class="a" style="left:406.4px;top:135px;width:119.0px;height:15px;background:#0078d7"></div>
<div class="a mono" style="left:49.4px;top:138px;color:#fff">66</div>
<div class="a mono" style="left:406.4px;top:138px;color:#fff">f</div>
<div class="a mono" style="left:70.4px;top:138px;color:#fff">65</div>
<div class="a mono" style="left:413.4px;top:138px;color:#fff">e</div>
<div class="a mono" style="left:91.4px;top:138px;color:#fff">6d</div>
<div class="a mono" style="left:420.4px;top:138px;color:#fff">m</div>
<div class="a mono" style="left:112.4px;top:138px;color:#fff">6a</div>
<div class="a mono" style="left:427.4px;top:138px;color:#fff">j</div>
<div class="a mono" style="left:133.4px;top:138px;color:#fff">68</div>
<div class="a mono" style="left:434.4px;top:138px;color:#fff">h</div>
<div class="a mono" style="left:154.4px;top:138px;color:#fff">6f</div>
<div class="a mono" style="left:441.4px;top:138px;color:#fff">o</div>
<div class="a mono" style="left:175.4px;top:138px;color:#fff">66</div>
<div class="a mono" style="left:448.4px;top:138px;color:#fff">f</div>
<div class="a mono" style="left:196.4px;top:138px;color:#fff">6d</div>
<div class="a mono" style="left:455.4px;top:138px;color:#fff">m</div>
<div class="a mono" style="left:224.4px;top:138px;color:#fff">66</div>
<div class="a mono" style="left:469.4px;top:138px;color:#fff">f</div>
<div class="a mono" style="left:245.4px;top:138px;color:#fff">62</div>
<div class="a mono" style="left:476.4px;top:138px;color:#fff">b</div>
<div class="a mono" style="left:266.4px;top:138px;color:#fff">6c</div>
<div class="a mono" style="left:483.4px;top:138px;color:#fff">l</div>
<div class="a mono" style="left:287.4px;top:138px;color:#fff">6d</div>
<div class="a mono" style="left:490.4px;top:138px;color:#fff">m</div>
<div class="a mono" style="left:308.4px;top:138px;color:#fff">6e</div>
<div class="a mono" style="left:497.4px;top:138px;color:#fff">n</div>
<div class="a mono" style="left:329.4px;top:138px;color:#fff">69</div>
<div class="a mono" style="left:504.4px;top:138px;color:#fff">i</div>
<div class="a mono" style="left:350.4px;top:138px;color:#fff">62</div>
<div class="a mono" style="left:511.4px;top:138px;color:#fff">b</div>
<div class="a mono" style="left:371.4px;top:138px;color:#fff">5f</div>
<div class="a mono" style="left:518.4px;top:138px;color:#fff">_</div>
<div class="a mono" style="left:7.4px;top:153px;color:#000">00a0</div>
<div class="a" style="left:49.4px;top:150px;width:336.0px;height:15px;background:#0078d7"></div>
<div class="a" style="left:406.4px;top:150px;width:119.0px;height:15px;background:#0078d7"></div>
<div class="a mono" style="left:49.4px;top:153px;color:#fff">36</div>
<div class="a mono" style="left:406.4px;top:153px;color:#fff">6</div>
<div class="a mono" style="left:70.4px;top:153px;color:#fff">39</div>
<div class="a mono" style="left:413.4px;top:153px;color:#fff">9</div>
<div class="a mono" style="left:91.4px;top:153px;color:#fff">37</div>
<div class="a mono" style="left:420.4px;top:153px;color:#fff">7</div>
<div class="a mono" style="left:112.4px;top:153px;color:#fff">39</div>
<div class="a mono" style="left:427.4px;top:153px;color:#fff">9</div>
<div class="a mono" style="left:133.4px;top:153px;color:#fff">5f</div>
<div class="a mono" style="left:434.4px;top:153px;color:#fff">_</div>
<div class="a mono" style="left:154.4px;top:153px;color:#fff">61</div>
<div class="a mono" style="left:441.4px;top:153px;color:#fff">a</div>
<div class="a mono" style="left:175.4px;top:153px;color:#fff">6c</div>
<div class="a mono" style="left:448.4px;top:153px;color:#fff">l</div>
<div class="a mono" style="left:196.4px;top:153px;color:#fff">6c</div>
<div class="a mono" style="left:455.4px;top:153px;color:#fff">l</div>
<div class="a mono" style="left:224.4px;top:153px;color:#fff">5f</div>
<div class="a mono" style="left:469.4px;top:153px;color:#fff">_</div>
<div class="a mono" style="left:245.4px;top:153px;color:#fff">61</div>
<div class="a mono" style="left:476.4px;top:153px;color:#fff">a</div>
<div class="a mono" style="left:266.4px;top:153px;color:#fff">63</div>
<div class="a mono" style="left:483.4px;top:153px;color:#fff">c</div>
<div class="a mono" style="left:287.4px;top:153px;color:#fff">33</div>
<div class="a mono" style="left:490.4px;top:153px;color:#fff">3</div>
<div class="a mono" style="left:308.4px;top:153px;color:#fff">62</div>
<div class="a mono" style="left:497.4px;top:153px;color:#fff">b</div>
<div class="a mono" style="left:329.4px;top:153px;color:#fff">6b</div>
<div class="a mono" style="left:504.4px;top:153px;color:#fff">k</div>
<div class="a mono" style="left:350.4px;top:153px;color:#fff">74</div>
<div class="a mono" style="left:511.4px;top:153px;color:#fff">t</div>
<div class="a mono" style="left:371.4px;top:153px;color:#fff">67</div>
<div class="a mono" style="left:518.4px;top:153px;color:#fff">g</div>
<div class="a mono" style="left:7.4px;top:168px;color:#000">00b0</div>
<div class="a" style="left:49.4px;top:165px;width:336.0px;height:15px;background:#0078d7"></div>
<div class="a" style="left:406.4px;top:165px;width:119.0px;height:15px;background:#0078d7"></div>
<div class="a mono" style="left:49.4px;top:168px;color:#fff">64</div>
<div class="a mono" style="left:406.4px;top:168px;color:#fff">d</div>
<div class="a mono" style="left:70.4px;top:168px;color:#fff">75</div>
<div class="a mono" style="left:413.4px;top:168px;color:#fff">u</div>
<div class="a mono" style="left:91.4px;top:168px;color:#fff">6c</div>
<div class="a mono" style="left:420.4px;top:168px;color:#fff">l</div>
<div class="a mono" style="left:112.4px;top:168px;color:#fff">61</div>
<div class="a mono" style="left:427.4px;top:168px;color:#fff">a</div>
<div class="a mono" style="left:133.4px;top:168px;color:#fff">68</div>
<div class="a mono" style="left:434.4px;top:168px;color:#fff">h</div>
<div class="a mono" style="left:154.4px;top:168px;color:#fff">6d</div>
<div class="a mono" style="left:441.4px;top:168px;color:#fff">m</div>
<div class="a mono" style="left:175.4px;top:168px;color:#fff">6d</div>
<div class="a mono" style="left:448.4px;top:168px;color:#fff">m</div>
<div class="a mono" style="left:196.4px;top:168px;color:#fff">37</div>
<div class="a mono" style="left:455.4px;top:168px;color:#fff">7</div>
<div class="a mono" style="left:224.4px;top:168px;color:#fff">67</div>
<div class="a mono" style="left:469.4px;top:168px;color:#fff">g</div>
<div class="a mono" style="left:245.4px;top:168px;color:#fff">64</div>
<div class="a mono" style="left:476.4px;top:168px;color:#fff">d</div>
<div class="a mono" style="left:266.4px;top:168px;color:#fff">76</div>
<div class="a mono" style="left:483.4px;top:168px;color:#fff">v</div>
<div class="a mono" style="left:287.4px;top:168px;color:#fff">37</div>
<div class="a mono" style="left:490.4px;top:168px;color:#fff">7</div>
<div class="a mono" style="left:308.4px;top:168px;color:#fff">77</div>
<div class="a mono" style="left:497.4px;top:168px;color:#fff">w</div>
<div class="a mono" style="left:329.4px;top:168px;color:#fff">6f</div>
<div class="a mono" style="left:504.4px;top:168px;color:#fff">o</div>
<div class="a mono" style="left:350.4px;top:168px;color:#fff">74</div>
<div class="a mono" style="left:511.4px;top:168px;color:#fff">t</div>
<div class="a mono" style="left:371.4px;top:168px;color:#fff">63</div>
<div class="a mono" style="left:518.4px;top:168px;color:#fff">c</div>
<div class="a mono" style="left:7.4px;top:183px;color:#000">00c0</div>
<div class="a" style="left:49.4px;top:180px;width:210.0px;height:15px;background:#0078d7"></div>
<div class="a" style="left:406.4px;top:180px;width:77.0px;height:15px;background:#0078d7"></div>
<div class="a mono" style="left:49.4px;top:183px;color:#fff">32</div>
<div class="a mono" style="left:406.4px;top:183px;color:#fff">2</div>
<div class="a mono" style="left:70.4px;top:183px;color:#fff">33</div>
<div class="a mono" style="left:413.4px;top:183px;color:#fff">3</div>
<div class="a mono" style="left:91.4px;top:183px;color:#fff">75</div>
<div class="a mono" style="left:420.4px;top:183px;color:#fff">u</div>
<div class="a mono" style="left:112.4px;top:183px;color:#fff">62</div>
<div class="a mono" style="left:427.4px;top:183px;color:#fff">b</div>
<div class="a mono" style="left:133.4px;top:183px;color:#fff">71</div>
<div class="a mono" style="left:434.4px;top:183px;color:#fff">q</div>
<div class="a mono" style="left:154.4px;top:183px;color:#fff">2e</div>
<div class="a mono" style="left:441.4px;top:183px;color:#fff">.</div>
<div class="a mono" style="left:175.4px;top:183px;color:#fff">63</div>
<div class="a mono" style="left:448.4px;top:183px;color:#fff">c</div>
<div class="a mono" style="left:196.4px;top:183px;color:#fff">72</div>
<div class="a mono" style="left:455.4px;top:183px;color:#fff">r</div>
<div class="a mono" style="left:224.4px;top:183px;color:#fff">78</div>
<div class="a mono" style="left:469.4px;top:183px;color:#fff">x</div>
<div class="a mono" style="left:245.4px;top:183px;color:#fff">33</div>
<div class="a mono" style="left:476.4px;top:183px;color:#fff">3</div>
<div class="a mono" style="left:266.4px;top:183px;color:#000">20</div>
<div class="a mono" style="left:287.4px;top:183px;color:#000">48</div>
<div class="a mono" style="left:490.4px;top:183px;color:#000">H</div>
<div class="a mono" style="left:308.4px;top:183px;color:#000">54</div>
<div class="a mono" style="left:497.4px;top:183px;color:#000">T</div>
<div class="a mono" style="left:329.4px;top:183px;color:#000">54</div>
<div class="a mono" style="left:504.4px;top:183px;color:#000">T</div>
<div class="a mono" style="left:350.4px;top:183px;color:#000">50</div>
<div class="a mono" style="left:511.4px;top:183px;color:#000">P</div>
<div class="a mono" style="left:371.4px;top:183px;color:#000">2f</div>
<div class="a mono" style="left:518.4px;top:183px;color:#000">/</div>
<div class="a mono" style="left:7.4px;top:198px;color:#a0a0a0">00d0</div>
<div class="a mono" style="left:49.4px;top:198px;color:#000">31</div>
<div class="a mono" style="left:406.4px;top:198px;color:#000">1</div>
<div class="a mono" style="left:70.4px;top:198px;color:#000">2e</div>
<div class="a mono" style="left:413.4px;top:198px;color:#000">.</div>
<div class="a mono" style="left:91.4px;top:198px;color:#000">31</div>
<div class="a mono" style="left:420.4px;top:198px;color:#000">1</div>
<div class="a mono" style="left:112.4px;top:198px;color:#000">0d</div>
<div class="a mono" style="left:427.4px;top:198px;color:#a8a8a8">·</div>
<div class="a mono" style="left:133.4px;top:198px;color:#000">0a</div>
<div class="a mono" style="left:434.4px;top:198px;color:#a8a8a8">·</div>
<div class="a mono" style="left:154.4px;top:198px;color:#000">43</div>
<div class="a mono" style="left:441.4px;top:198px;color:#000">C</div>
<div class="a mono" style="left:175.4px;top:198px;color:#000">6f</div>
<div class="a mono" style="left:448.4px;top:198px;color:#000">o</div>
<div class="a mono" style="left:196.4px;top:198px;color:#000">6e</div>
<div class="a mono" style="left:455.4px;top:198px;color:#000">n</div>
<div class="a mono" style="left:224.4px;top:198px;color:#000">6e</div>
<div class="a mono" style="left:469.4px;top:198px;color:#000">n</div>
<div class="a mono" style="left:245.4px;top:198px;color:#000">65</div>
<div class="a mono" style="left:476.4px;top:198px;color:#000">e</div>
<div class="a mono" style="left:266.4px;top:198px;color:#000">63</div>
<div class="a mono" style="left:483.4px;top:198px;color:#000">c</div>
<div class="a mono" style="left:287.4px;top:198px;color:#000">74</div>
<div class="a mono" style="left:490.4px;top:198px;color:#000">t</div>
<div class="a mono" style="left:308.4px;top:198px;color:#000">69</div>
<div class="a mono" style="left:497.4px;top:198px;color:#000">i</div>
<div class="a mono" style="left:329.4px;top:198px;color:#000">6f</div>
<div class="a mono" style="left:504.4px;top:198px;color:#000">o</div>
<div class="a mono" style="left:350.4px;top:198px;color:#000">6e</div>
<div class="a mono" style="left:511.4px;top:198px;color:#000">n</div>
<div class="a mono" style="left:371.4px;top:198px;color:#000">3a</div>
<div class="a mono" style="left:518.4px;top:198px;color:#000">:</div>
<div class="a mono" style="left:7.4px;top:213px;color:#a0a0a0">00e0</div>
<div class="a mono" style="left:49.4px;top:213px;color:#000">20</div>
<div class="a mono" style="left:70.4px;top:213px;color:#000">4b</div>
<div class="a mono" style="left:413.4px;top:213px;color:#000">K</div>
<div class="a mono" style="left:91.4px;top:213px;color:#000">65</div>
<div class="a mono" style="left:420.4px;top:213px;color:#000">e</div>
<div class="a mono" style="left:112.4px;top:213px;color:#000">65</div>
<div class="a mono" style="left:427.4px;top:213px;color:#000">e</div>
<div class="a mono" style="left:133.4px;top:213px;color:#000">70</div>
<div class="a mono" style="left:434.4px;top:213px;color:#000">p</div>
<div class="a mono" style="left:154.4px;top:213px;color:#000">2d</div>
<div class="a mono" style="left:441.4px;top:213px;color:#000">-</div>
<div class="a mono" style="left:175.4px;top:213px;color:#000">41</div>
<div class="a mono" style="left:448.4px;top:213px;color:#000">A</div>
<div class="a mono" style="left:196.4px;top:213px;color:#000">6c</div>
<div class="a mono" style="left:455.4px;top:213px;color:#000">l</div>
<div class="a mono" style="left:224.4px;top:213px;color:#000">69</div>
<div class="a mono" style="left:469.4px;top:213px;color:#000">i</div>
<div class="a mono" style="left:245.4px;top:213px;color:#000">76</div>
<div class="a mono" style="left:476.4px;top:213px;color:#000">v</div>
<div class="a mono" style="left:266.4px;top:213px;color:#000">65</div>
<div class="a mono" style="left:483.4px;top:213px;color:#000">e</div>
<div class="a mono" style="left:287.4px;top:213px;color:#000">0d</div>
<div class="a mono" style="left:490.4px;top:213px;color:#a8a8a8">·</div>
<div class="a mono" style="left:308.4px;top:213px;color:#000">0a</div>
<div class="a mono" style="left:497.4px;top:213px;color:#a8a8a8">·</div>
<div class="a mono" style="left:329.4px;top:213px;color:#000">41</div>
<div class="a mono" style="left:504.4px;top:213px;color:#000">A</div>
<div class="a mono" style="left:350.4px;top:213px;color:#000">63</div>
<div class="a mono" style="left:511.4px;top:213px;color:#000">c</div>
<div class="a mono" style="left:371.4px;top:213px;color:#000">63</div>
<div class="a mono" style="left:518.4px;top:213px;color:#000">c</div>
<div class="a sbg" style="left:941px;top:0;width:17px;height:230px"></div>
<div class="a thumb" style="left:942px;top:17px;width:15px;height:116px"></div>
<svg class="a" style="left:945px;top:5px" width="9" height="9" viewBox="0 0 9 9"><path d="M1 6 L4.5 2.5 L8 6" stroke="#606060" stroke-width="1.6" fill="none"/></svg>
<svg class="a" style="left:945px;top:216px" width="9" height="9" viewBox="0 0 9 9"><path d="M1 3 L4.5 6.5 L8 3" stroke="#606060" stroke-width="1.6" fill="none"/></svg>
</div>
<svg class="a" style="left:0;top:560px" width="970" height="33" viewBox="0 560 970 33">
<defs><radialGradient id="rec" cx="0.45" cy="0.35" r="0.7"><stop offset="0" stop-color="#f07a7a"/><stop offset="0.6" stop-color="#dc4a4a"/><stop offset="1" stop-color="#c03636"/></radialGradient>
<linearGradient id="edoc" x1="0" y1="0" x2="0" y2="1"><stop offset="0" stop-color="#3a9ae0"/><stop offset="0.35" stop-color="#bfe0f5"/><stop offset="0.45" stop-color="#f4f4ee"/><stop offset="1" stop-color="#f0f0e6"/></linearGradient></defs>
<circle cx="22.9" cy="577" r="6.6" fill="url(#rec)" stroke="#a83030" stroke-width="0.6"/>
<rect x="39.5" y="570.5" width="11" height="13" fill="url(#edoc)" stroke="#b8b8b0" stroke-width="0.8"/>
<path d="M41.5 577.5 H47 M41.5 580 H48" stroke="#c0c0c0" stroke-width="0.7"/>
<path d="M52.3 571.5 L44.5 579.3" stroke="#333" stroke-width="2.3" stroke-linecap="round"/>
<path d="M44.8 578.5 L43.2 581.2 L45.8 580 Z" fill="#222"/>
<path d="M561.5 569 V586 M565.5 569 V586 M856.5 569 V586 M860.5 569 V586 M947.5 569 V586" stroke="#b8b8b8" stroke-width="1"/>
<g fill="#c4c4c4">
<rect x="960" y="578" width="2" height="2"/>
<rect x="957" y="581" width="2" height="2"/><rect x="960" y="581" width="2" height="2"/>
<rect x="954" y="584" width="2" height="2"/><rect x="957" y="584" width="2" height="2"/><rect x="960" y="584" width="2" height="2"/>
</g>
</svg>
<div class="a ui" style="left:67px;top:572px;font-size:11px">Hypertext Transfer Protocol: Protocol</div>
<div class="a ui" style="left:575px;top:572px;font-size:11px">Packets: 3606 · Displayed: 4 (0.1%) · Dropped: 0 (0.0%)</div>
<div class="a ui" style="left:870px;top:572px;font-size:11px">Profile: Default</div>
</body></html>
